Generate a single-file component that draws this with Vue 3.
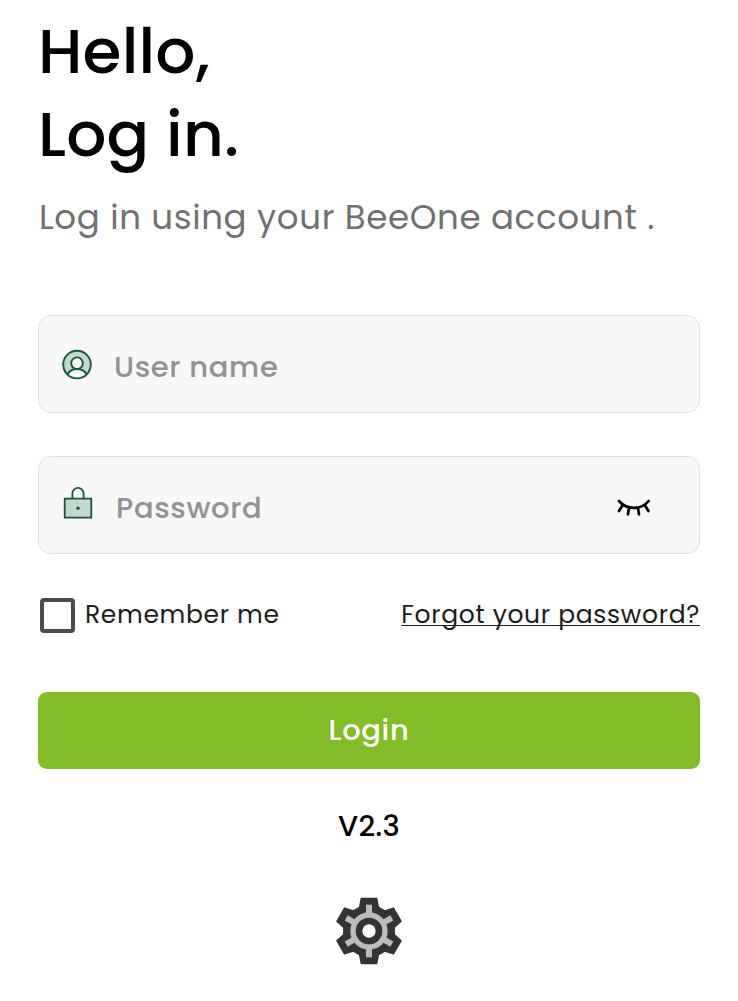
<script setup>
import { ref } from 'vue'

const username = ref('')
const password = ref('')
const remember = ref(false)

const rotate = ([x, y], deg) => {
  const a = (deg * Math.PI) / 180
  return [x * Math.cos(a) - y * Math.sin(a), x * Math.sin(a) + y * Math.cos(a)]
}
const tooth = [[-2.85, -7.1], [-2.3, -9.8], [2.3, -9.8], [2.85, -7.1]]
const angles = [0, 60, 120, 180, 240, 300]
const gearPoints = angles
  .flatMap((deg) => tooth.map((p) => rotate(p, deg).map((n) => n.toFixed(2)).join(',')))
  .join(' ')
</script>

<template>
  <main class="page">
    <h1 class="title">Hello,<br />Log in.</h1>
    <p class="subtitle">Log in using your BeeOne account .</p>

    <form class="form" @submit.prevent>
      <label class="field">
        <svg class="icon" viewBox="0 0 32 34" width="32" height="34">
          <circle cx="15" cy="15.6" r="13.8" fill="#c3d8ce" />
          <path d="M5.3 25.5C9.5 18.2 20.5 18.2 24.7 25.5C19.5 30.6 10.5 30.6 5.3 25.5Z" fill="#f8f8f8" />
          <circle cx="15" cy="14.2" r="5.8" fill="#f8f8f8" />
          <g fill="none" stroke="#18563a" stroke-width="1.9">
            <circle cx="15" cy="15.6" r="13.8" />
            <circle cx="15" cy="14.2" r="5.8" />
            <path d="M5.3 25.5C9.5 18.2 20.5 18.2 24.7 25.5" />
          </g>
        </svg>
        <input v-model="username" class="input user" type="text" placeholder="User name" />
      </label>

      <label class="field second">
        <svg class="icon" viewBox="0 0 32 34" width="32" height="34">
          <g fill="none" stroke="#18563a" stroke-width="1.8" stroke-linejoin="round">
            <path d="M10.4 12.5V7.5a5.6 5.6 0 0 1 11.2 0V12.5" />
            <rect x="2.7" y="12.7" width="26.6" height="18.9" fill="#c3d8ce" />
          </g>
          <circle cx="16" cy="22.3" r="1.7" fill="#18563a" />
        </svg>
        <input v-model="password" class="input pass" type="password" placeholder="Password" />
        <svg class="eye" viewBox="0 0 36 20" width="36" height="20">
          <path
            d="M3 3C11 12.2 25.3 12.2 32.6 3M6.7 7L3 13M13 9.6L12 16.3M21.9 9.6L23 16.3M28.8 7L32.4 13"
            fill="none" stroke="#000" stroke-width="2.7" stroke-linecap="round"
          />
        </svg>
      </label>

      <div class="options">
        <label class="remember">
          <input v-model="remember" class="box" type="checkbox" />
          <span class="remember-text">Remember me</span>
        </label>
        <a class="forgot">Forgot your password?</a>
      </div>

      <button class="login" type="submit">Login</button>
    </form>

    <div class="version">V2.3</div>
    <svg class="gear" viewBox="-12 -12 24 24" width="80" height="80">
      <polygon :points="gearPoints" fill="#333" stroke="#333" stroke-width=".4" stroke-linejoin="round" />
      <circle r="5.6" fill="#bcbcbc" />
      <rect
        v-for="deg in angles" :key="deg" x="-.9" y="-7.9" width="1.8" height="4"
        fill="#bcbcbc" :transform="`rotate(${deg})`"
      />
      <circle r="4" fill="#333" />
      <circle r="2" fill="#fff" />
    </svg>
  </main>
</template>

<style>
html, body { background: #fff; }
</style>

<style scoped>
.page {
  box-sizing: border-box;
  height: 1001px;
  padding: 10px 38px 0;
  display: flex;
  flex-direction: column;
  overflow: hidden;
  font-family: Poppins, Inter, "Open Sans", sans-serif;
}
.title {
  margin: 0;
  font-size: 63px;
  font-weight: 500;
  line-height: 83px;
  letter-spacing: 0.2px;
  color: #000;
  white-space: nowrap;
}
.subtitle {
  margin: 21px 0 0;
  padding-left: 1px;
  font-size: 34px;
  line-height: 40px;
  letter-spacing: 0.66px;
  color: #707070;
  white-space: nowrap;
}
.form { margin-top: 78px; }
.field {
  box-sizing: border-box;
  height: 98px;
  width: 662px;
  padding: 0 47px 0 23px;
  display: flex;
  align-items: center;
  border: 1px solid #e0e0e0;
  border-radius: 13px;
  background: #f8f8f8;
}
.second { margin-top: 43px; }
.icon { flex: none; margin-top: 4px; }
.second .icon { margin-top: 0; margin-bottom: 4px; }
.input {
  flex: 1;
  min-width: 0;
  height: 60px;
  margin: 6px 0 0 20px;
  padding: 0;
  border: 0;
  outline: 0;
  background: transparent;
  font: 500 29px/60px Poppins, Inter, "Open Sans", sans-serif;
  letter-spacing: 0.65px;
}
.input::placeholder { color: #929292; opacity: 1; }
.pass { margin-left: 22px; }
.eye { flex: none; margin-top: 5px; }
.options {
  height: 36px;
  margin-top: 43px;
  display: flex;
  align-items: center;
  justify-content: space-between;
  color: #1c1c1c;
  font-size: 25px;
  line-height: 36px;
  white-space: nowrap;
}
.remember { display: flex; gap: 10px; margin-left: 2px; }
.remember-text { letter-spacing: 0.66px; margin-top: -1px; }
.box {
  appearance: none;
  box-sizing: border-box;
  width: 35px;
  height: 35px;
  margin: 0;
  border: 4px solid #4b4b4f;
  border-radius: 4px;
}
.forgot {
  margin-top: -1px;
  letter-spacing: 0.68px;
  text-decoration: underline;
  text-decoration-thickness: 1px;
  text-underline-offset: 2px;
  text-decoration-skip-ink: none;
}
.login {
  display: block;
  width: 662px;
  height: 77px;
  margin: 59px 0 0;
  padding: 0;
  border: 0;
  border-radius: 9px;
  background: #82bc26;
  color: #fff;
  font: 500 29px/77px Poppins, Inter, "Open Sans", sans-serif;
  letter-spacing: 0.65px;
}
.version {
  margin-top: 37px;
  font-size: 29px;
  font-weight: 500;
  line-height: 40px;
  letter-spacing: 0.2px;
  text-align: center;
}
.gear { flex: none; align-self: center; margin-top: 45px; }
</style>
